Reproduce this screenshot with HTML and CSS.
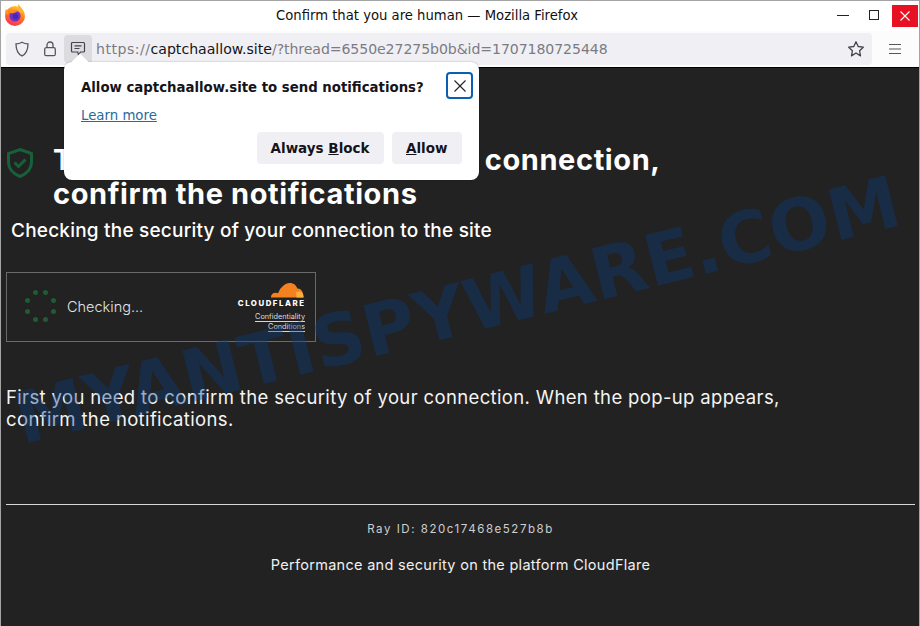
FILE: index.html
```html
<!DOCTYPE html>
<html lang="en">
<head>
<meta charset="utf-8">
<title>Confirm that you are human — Mozilla Firefox</title>
<link rel="stylesheet" href="styles.css">
</head>
<body>
<div class="window">
  <header class="titlebar">
    <svg class="fx-logo" width="24" height="24" viewBox="0 0 24 24">
      <defs>
        <linearGradient id="fxo" x1="0.7" y1="0" x2="0.3" y2="1"><stop offset="0" stop-color="#ffd02a"/><stop offset="0.45" stop-color="#ff7a1e"/><stop offset="1" stop-color="#f0305a"/></linearGradient>
      </defs>
      <circle cx="13" cy="13" r="10" fill="url(#fxo)"/>
      <path d="M16 1c2 2 5 5 6 9l-5-1c0-3-1-5-1-8z" fill="#ffb52a"/>
      <path d="M4 6c-1 2-1 4-1 6l4-2c-1-1-2-3-3-4z" fill="#ff9a26"/>
      <circle cx="13" cy="13" r="5.6" fill="#7c2bc4"/>
      <circle cx="13.4" cy="13.4" r="2.8" fill="#3f2bb5"/>
      <path d="M7 9c2-2 6-3 9-1l-4 2c-2 0-3 1-5-1z" fill="#ff8a22"/>
    </svg>
    <div class="title">Confirm that you are human — Mozilla Firefox</div>
    <div class="winbtns">
      <span class="winbtn"><svg width="14" height="14" viewBox="0 0 14 14"><path d="M1 6.500h12" stroke="#222" stroke-width="1"/></svg></span>
      <span class="winbtn"><svg width="12" height="12" viewBox="0 0 12 12"><rect x="1.500" y="0.500" width="9" height="9" fill="none" stroke="#222"/></svg></span>
      <span class="winbtn close"><svg width="12" height="12" viewBox="0 0 12 12"><path d="M1.500 1.500l9 9M10.500 1.500l-9 9" stroke="#fff" stroke-width="1.100"/></svg></span>
    </div>
  </header>
  <nav class="toolbar">
    <div class="urlbar">
      <span class="urlicon"><svg width="18" height="18" viewBox="0 0 18 18"><path d="M9 2.200c2.200 1.200 4.200 1.600 6 1.700 0 5.600-1.500 9.700-6 12-4.500-2.300-6-6.400-6-12 1.800-.1 3.800-.5 6-1.700z" fill="none" stroke="#55555f" stroke-width="1.300"/></svg></span>
      <span class="urlicon"><svg width="16" height="18" viewBox="0 0 16 18"><rect x="2.700" y="7.700" width="10.600" height="8" rx="1.500" fill="none" stroke="#55555f" stroke-width="1.300"/><path d="M5 7.500V5a3 3 0 0 1 6 0v2.500" fill="none" stroke="#55555f" stroke-width="1.300"/></svg></span>
      <span class="urlicon active"><svg width="16" height="16" viewBox="0 0 16 16"><path d="M2.500 1.500h11a1 1 0 0 1 1 1v7.500a1 1 0 0 1-1 1H10.500l-2 3-.7-3H2.500a1 1 0 0 1-1-1V2.500a1 1 0 0 1 1-1z" fill="none" stroke="#44444c" stroke-width="1.200"/><path d="M4.500 4.800h7M4.500 7.500h5" stroke="#44444c" stroke-width="1.200"/></svg></span>
      <span class="url"><span class="scheme">https://</span><b>captchaallow.site</b><span class="query">/?thread=6550e27275b0b&amp;id=1707180725448</span></span>
      <span class="star"><svg width="18" height="18" viewBox="0 0 18 18"><path d="M9 1.800l2.200 4.700 5.100.7-3.700 3.600.9 5.100L9 13l-4.500 2.900.9-5.100-3.700-3.600 5.100-.7z" fill="none" stroke="#44444c" stroke-width="1.300" stroke-linejoin="round"/></svg></span>
    </div>
    <span class="menu"><svg width="14" height="12" viewBox="0 0 14 12"><path d="M1 1.500h12M1 6h12M1 10.500h12" stroke="#55555f" stroke-width="1.200"/></svg></span>
  </nav>
  <main class="page">
    <div class="headline">
      <svg class="shield" width="30" height="32" viewBox="0 0 30 32"><path d="M15 2.500l11.500 4v9c0 6.500-4.500 11-11.500 14-7-3-11.500-7.500-11.500-14v-9z" fill="none" stroke="#17603a" stroke-width="3"/><path d="M9.500 15.500l4 4 7-7" fill="none" stroke="#17603a" stroke-width="3"/></svg>
      <h1><span class="covered">To check the security of your</span> connection,<br>confirm the notifications</h1>
    </div>
    <h2>Checking the security of your connection to the site</h2>
    <section class="widget">
      <div class="spinner">
        <i class="d1"></i><i class="d2"></i><i class="d3"></i><i class="d4"></i><i class="d5"></i><i class="d6"></i><i class="d7"></i><i class="d8"></i>
      </div>
      <span class="checking">Checking...</span>
      <div class="brand">
        <svg width="34" height="17" viewBox="0 0 36 17"><path d="M1 16c0-3 2-5 5-5 1 0 2 .2 2.500.5C10 8 11 6 13 4.500 15 2 18 .5 21 .5c4 0 7 2.500 8 6 3.500-.2 6.500 3 6.500 9.500z" fill="#f48120"/><path d="M28 16c.5-3-.5-5-1-6l5-.5c2 .6 3.500 3 3.500 6.500z" fill="#fbad41"/></svg>
        <strong>CLOUDFLARE</strong>
        <a>Confidentiality</a>
        <a>Conditions</a>
      </div>
    </section>
    <p class="lead">First you need to confirm the security of your connection. When the pop-up appears, confirm the notifications.</p>
    <hr class="rule">
    <div class="ray">Ray ID: 820c17468e527b8b</div>
    <div class="perf">Performance and security on the platform CloudFlare</div>
  </main>
  <aside class="popup">
    <div class="popup-top">
      <strong>Allow captchaallow.site to send notifications?</strong>
      <span class="popup-close"><svg width="14" height="14" viewBox="0 0 14 14"><path d="M1.500 1.500l11 11M12.500 1.500l-11 11" stroke="#222" stroke-width="1.100"/></svg></span>
    </div>
    <a class="learn">Learn more</a>
    <div class="popup-actions">
      <button>Always <u>B</u>lock</button>
      <button class="allow"><u>A</u>llow</button>
    </div>
  </aside>
  <div class="watermark">MYANTISPYWARE.COM</div>
</div>
</body>
</html>
```
FILE: styles.css
```css
* { box-sizing: border-box; }
html, body { margin: 0; height: 100%; }
body { background: #222; font-family: "Inter", "Liberation Sans", sans-serif; overflow: hidden; }
.window { position: relative; width: 920px; height: 626px; display: flex; flex-direction: column; border: 1px solid #a4a4a4; border-bottom: none; overflow: hidden; }
.titlebar { height: 30px; flex: none; background: #fff; display: flex; align-items: center; position: relative; }
.fx-logo { margin: -2px 0 0 1px; flex: none; }
.title { position: absolute; left: 0; right: 66px; top: 7px; text-align: center; font: 13.200px/16px "DejaVu Sans", sans-serif; color: #111; }
.winbtns { margin-left: auto; display: flex; align-items: center; }
.winbtn { width: 31px; height: 23px; display: flex; align-items: center; justify-content: center; }
.winbtn.close { width: 26px; margin: 0 1px 0 3px; background: #e81123; height: 22px; }
.toolbar { height: 36px; flex: none; background: #fcfcfd; display: flex; align-items: center; }
.urlbar { width: 866px; height: 32px; margin-left: 5px; background: #f0f0f4; border-radius: 4px; display: flex; align-items: center; padding-left: 2px; }
.urlicon { width: 28px; height: 28px; display: flex; align-items: center; justify-content: center; flex: none; }
.active { background: #dcdce0; border-radius: 4px; }
.url { margin-left: 4px; font: 14.100px/16px "DejaVu Sans", sans-serif; color: #7b7b83; white-space: nowrap; flex: 1; }
.url b { font-weight: 400; color: #15141a; }
.scheme { letter-spacing: 0.500px; }
.query { letter-spacing: -0.080px; }
.star { margin-right: 7px; display: flex; }
.menu { margin-left: 16px; display: flex; }
.page { flex: 1; background: #222; border-top: 1px solid #000; color: #fff; padding: 0 4px 0 5px; min-height: 0; }
.headline { display: flex; margin-top: 75px; }
.shield { flex: none; margin: 4px 0 0 -1px; }
h1 { margin: 0 0 0 18px; font-size: 29px; line-height: 34px; font-weight: 700; white-space: nowrap; letter-spacing: 0.600px; }
.covered { letter-spacing: 0.400px; }
h2 { margin: 8px 0 0 5px; font-size: 19px; line-height: 24px; font-weight: 500; letter-spacing: 0.210px; }
.widget { margin-top: 29px; width: 310px; height: 70px; border: 1px solid #6a6a6a; display: flex; align-items: center; padding-left: 16px; background: #222; }
.spinner { width: 35px; height: 35px; position: relative; flex: none; }
.spinner i { position: absolute; width: 5px; height: 5px; border-radius: 50%; background: #1d5c34; }
.d1 { left: 10px; top: 0; } .d2 { left: 20px; top: 0; }
.d3 { left: 28px; top: 8px; } .d4 { left: 28px; top: 19px; }
.d5 { left: 20px; top: 27px; } .d6 { left: 10px; top: 27px; }
.d7 { left: 2px; top: 19px; } .d8 { left: 2px; top: 8px; }
.checking { margin: -2px 0 0 9px; font-size: 14.500px; color: #e4e4e4; font-weight: 300; }
.brand { margin-left: auto; padding-right: 10px; display: flex; flex-direction: column; align-items: flex-end; }
.brand svg { margin: 0 1px 0 0; }
.brand strong { font-size: 7.800px; line-height: 9px; letter-spacing: 1.550px; font-weight: 800; margin: 0 -0.500px 0 0; }
.brand a { font-size: 7.300px; line-height: 9px; color: #ddd; border-bottom: 1px solid #cfd8ea; }
.brand strong + a { margin-top: 4px; }
.brand a + a { margin-top: 0; }
.lead { margin: 44px 0 0 0; width: 790px; font-size: 18.500px; line-height: 22px; color: #f4f4f4; font-weight: 400; letter-spacing: 0.360px; }
.rule { margin: 74px 0 0 0; border: none; height: 1px; background: #d8d8d8; width: 909px; }
.ray { margin-top: 17px; text-align: center; font-size: 11.500px; line-height: 14px; letter-spacing: 1.550px; color: #cfcfcf; }
.perf { margin-top: 20px; text-align: center; font-size: 14.500px; line-height: 18px; color: #f0f0f0; letter-spacing: 0.300px; }
.popup { position: absolute; left: 63px; top: 61px; width: 415px; height: 118px; background: #fff; border-radius: 8px; padding: 10px 5px 0 17px; font-family: "DejaVu Sans", sans-serif; color: #15141a; box-shadow: 0 0 2px rgba(0,0,0,.3); }
.popup::before { content: ""; position: absolute; left: 10px; top: -6px; width: 12px; height: 12px; background: #fff; transform: rotate(45deg); }
.popup-top { display: flex; align-items: flex-start; justify-content: space-between; position: relative; }
.popup-top strong { font-size: 13.300px; line-height: 26px; margin-top: 3px; }
.popup-close { width: 27px; height: 27px; border: 2px solid #0a5fb4; border-radius: 4px; display: flex; align-items: center; justify-content: center; margin-right: 1px; }
.learn { display: block; margin-top: 7px; font-size: 13.300px; line-height: 16px; color: #2a6a9a; text-decoration: underline; width: max-content; }
.popup-actions { display: flex; justify-content: flex-end; gap: 8px; margin: 8px 12px 0 0; }
.popup-actions button { height: 32px; padding: 0 14px; border: none; border-radius: 4px; background: #f0f0f4; font: 700 13.500px "DejaVu Sans", sans-serif; color: #15141a; }
.popup-actions .allow { padding: 0 14.500px; }
.watermark { position: absolute; left: 2px; top: 268px; width: max-content; font: 700 71.500px/84px "DejaVu Sans", sans-serif; color: rgba(10,60,130,.38); transform: rotate(-14deg); white-space: nowrap; pointer-events: none; }
```
